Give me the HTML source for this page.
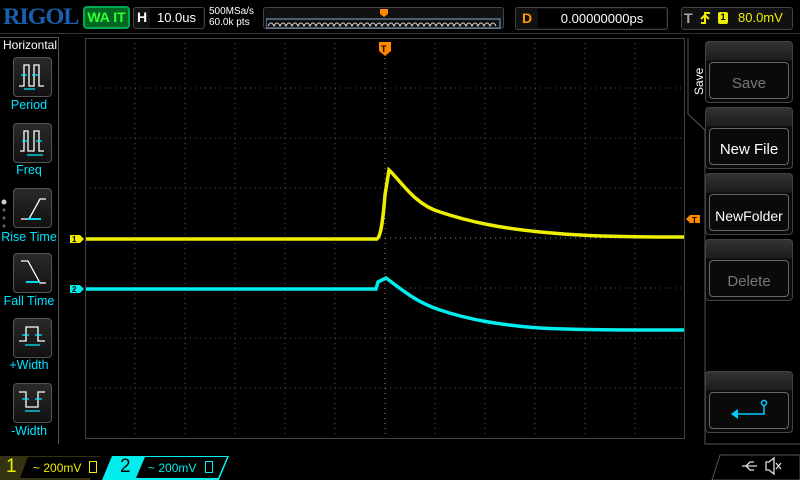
<!DOCTYPE html>
<html><head><style>
*{margin:0;padding:0;box-sizing:border-box}
body{width:800px;height:480px;background:#000;position:relative;overflow:hidden;font-family:"Liberation Sans",sans-serif;color:#fff}
.a{position:absolute}
.btn{position:absolute;left:13px;width:39px;height:40px;border:1px solid #555;border-radius:4px;background:linear-gradient(#2a2a2a,#111)}
.lbl{position:absolute;left:0;width:58px;text-align:center;color:#00e5ff;font-size:12.5px}
.sk{position:absolute;left:705px;width:88px;height:62px;border:1px solid #444;border-radius:4px;background:linear-gradient(#333 0,#1c1c1c 18px,#0a0a0a 19px)}
.sk div{position:absolute;left:3px;right:3px;top:20px;bottom:3px;border:1px solid #666;border-radius:4px;text-align:center;line-height:42px;font-size:15px}
</style></head><body>
<div class="a" style="left:3px;top:4px;font-family:'Liberation Serif',serif;font-weight:bold;font-size:23px;color:#1a5fb0;letter-spacing:-1px;transform:scaleX(1.05);transform-origin:left">RIGOL</div>
<div class="a" style="left:83px;top:6px;width:47px;height:23px;border:2px solid #0a5;border-radius:4px;background:#062;color:#3f3;font-weight:bold;font-size:14px;text-align:center;line-height:19px">WA IT</div>
<div class="a" style="left:133px;top:7px;width:72px;height:22px;border:1px solid #444;border-radius:3px;background:#111"></div>
<div class="a" style="left:137px;top:9px;font-weight:bold;font-size:14px">H</div>
<div class="a" style="left:150px;top:8px;width:53px;height:20px;background:#000;font-size:13px;text-align:center;line-height:20px">10.0us</div>
<div class="a" style="left:209px;top:6px;font-size:10px;line-height:11px">500MSa/s<br>60.0k pts</div>
<div class="a" style="left:263px;top:7px;width:241px;height:22px;border:1px solid #444;border-radius:3px;background:#111"></div>
<svg class="a" style="left:266px;top:8px" width="236" height="22"><rect x="0" y="11" width="234" height="9" fill="none" stroke="#8ac" stroke-width="1"/><path d="M2 18 q3-6 6 0 q3-6 6 0 q3-6 6 0 q3-6 6 0 q3-6 6 0 q3-6 6 0 q3-6 6 0 q3-6 6 0 q3-6 6 0 q3-6 6 0 q3-6 6 0 q3-6 6 0 q3-6 6 0 q3-6 6 0 q3-6 6 0 q3-6 6 0 q3-6 6 0 q3-6 6 0 q3-6 6 0 q3-6 6 0 q3-6 6 0 q3-6 6 0 q3-6 6 0 q3-6 6 0 q3-6 6 0 q3-6 6 0 q3-6 6 0 q3-6 6 0 q3-6 6 0 q3-6 6 0 q3-6 6 0 q3-6 6 0 q3-6 6 0 q3-6 6 0 q3-6 6 0 q3-6 6 0 q3-6 6 0 q3-6 6 0" fill="none" stroke="#ddd"/><path d="M114 1h8v5l-4 3-4-3z" fill="#f80"/></svg>
<div class="a" style="left:515px;top:7px;width:153px;height:23px;border:1px solid #444;border-radius:3px;background:#111"></div>
<div class="a" style="left:522px;top:10px;font-weight:bold;font-size:14px;color:#f90">D</div>
<div class="a" style="left:538px;top:9px;width:128px;height:19px;background:#000;font-size:13px;text-align:center;line-height:19px">0.00000000ps</div>
<div class="a" style="left:681px;top:7px;width:112px;height:23px;border:1px solid #444;border-radius:3px;background:#111"></div>
<div class="a" style="left:684px;top:10px;font-weight:bold;font-size:14px;color:#aaa">T</div>
<svg class="a" style="left:699px;top:10px" width="12" height="16"><path d="M2 13h4V3h5M2 9l4-4 4 4" fill="none" stroke="#ee0" stroke-width="2"/></svg>
<div class="a" style="left:718px;top:12px;width:10px;height:12px;background:#ee0;border-radius:2px;font-size:9px;color:#000;text-align:center;font-weight:bold">1</div>
<div class="a" style="left:738px;top:10px;font-size:13px;color:#ee0">80.0mV</div>
<div class="a" style="left:0;top:33px;width:800px;border-top:1px solid #333"></div>
<div class="a" style="left:0;top:37px;width:59px;height:407px;border-right:1px solid #555;border-top:1px solid #555"></div>
<div class="a" style="left:3px;top:38px;font-size:12px">Horizontal</div>
<div class="btn" style="top:57px"></div><div class="lbl" style="top:98px">Period</div>
<div class="btn" style="top:123px"></div><div class="lbl" style="top:163px">Freq</div>
<div class="btn" style="top:188px"></div><div class="lbl" style="top:230px">Rise Time</div>
<div class="btn" style="top:253px"></div><div class="lbl" style="top:294px">Fall Time</div>
<div class="btn" style="top:318px"></div><div class="lbl" style="top:358px">+Width</div>
<div class="btn" style="top:383px"></div><div class="lbl" style="top:424px">-Width</div>
<svg class="a" style="left:0;top:0" width="60" height="440" fill="none" stroke-width="1.3">
<path d="M19 86h5V65h5v21h5V65h5v21h5" stroke="#fff"/><path d="M21 75h6M32 75h6M24 89h11" stroke="#0ef"/>
<path d="M20 151h4V131h4v20h6V131h5v20h5" stroke="#fff"/><path d="M22 141h6M36 141h6M27 155h16" stroke="#0ef"/>
<path d="M21 219h8l11-20h6" stroke="#fff"/><path d="M27 219h14M37 214v0" stroke="#0ef" stroke-width="1.8"/>
<path d="M21 261h7l12 22h6" stroke="#fff"/><path d="M26 282h14" stroke="#0ef" stroke-width="1.8"/>
<path d="M19 341h7v-14h12v14h7" stroke="#fff"/><path d="M22 335h7M35 335h7M25 345h15" stroke="#0ef"/>
<path d="M19 392h7v15h12v-15h7" stroke="#fff"/><path d="M22 399h7M35 399h7M25 411h15" stroke="#0ef"/>
<circle cx="4" cy="202" r="2.5" fill="#ccc" stroke="none"/><circle cx="4" cy="210" r="1.5" fill="#666" stroke="none"/><circle cx="4" cy="218" r="1.5" fill="#666" stroke="none"/><circle cx="4" cy="226" r="1.5" fill="#666" stroke="none"/>
</svg>
<svg class="a" style="left:0;top:0" width="800" height="480">
<g stroke="#555" stroke-dasharray="1,4">
<path d="M135 38V438M185 38V438M235 38V438M285 38V438M335 38V438M435 38V438M485 38V438M535 38V438M585 38V438M635 38V438"/>
<path d="M85 88H684M85 138H684M85 188H684M85 288H684M85 338H684M85 388H684"/>
</g>
<g stroke="#888"><path d="M85 238H684M385 38V438" stroke-dasharray="1,4"/></g>
<rect x="85.5" y="38.5" width="599" height="400" fill="none" stroke="#444"/>
<path d="M379 42h12v9l-6 5-6-5z" fill="#f80"/>
<text x="381" y="52" font-size="9" fill="#000" font-weight="bold">T</text>
<path d="M86 239H377C381 236 383 220 385 195L389 170C400 180 415 205 440 212C470 222 500 228 540 232C570 235 600 237 684 237" fill="none" stroke="#ee0" stroke-width="3.5"/>
<path d="M86 289H376L378 282L386 278C400 288 415 302 440 310C470 320 500 325 540 328C580 330 620 330 684 330" fill="none" stroke="#0ee" stroke-width="3.5"/>
<path d="M70 235h10l4 4-4 4h-10z" fill="#ee0"/><text x="72" y="242" font-size="8" fill="#000" font-weight="bold">1</text>
<path d="M70 285h10l4 4-4 4h-10z" fill="#0ee"/><text x="72" y="292" font-size="8" fill="#000" font-weight="bold">2</text>
<path d="M686 219l4-4h10v8h-10z" fill="#f80"/><text x="692" y="223" font-size="8" fill="#000" font-weight="bold">T</text>
<path d="M688 38V114l17 16V444H800" fill="none" stroke="#555"/>
<path d="M0 456H100l-10 24H0z" fill="#331"/>
<path d="M28 457h73l-9 21H20z" fill="#000"/>
<path d="M112 456h117l-10 24H102z" fill="#0ee"/>
<path d="M145 457h82l-9 21h-82z" fill="#000"/>
<path d="M720 455h80v25h-88z" fill="none" stroke="#555"/>
<g stroke="#ddd" fill="none" stroke-width="1.3"><path d="M742 466h15M746 466l4-4h4M746 466l4 4h4"/><path d="M766 462h3l5-4v16l-5-4h-3z"/><path d="M776 463l5 6M781 463l-5 6"/></g>
</svg>
<div class="a" style="left:692px;top:95px;font-size:12px;transform:rotate(-90deg);transform-origin:left top">Save</div>
<div class="sk" style="top:41px"><div style="color:#777">Save</div></div>
<div class="sk" style="top:107px"><div>New File</div></div>
<div class="sk" style="top:173px"><div style="font-size:14px">NewFolder</div></div>
<div class="sk" style="top:239px"><div style="color:#777">Delete</div></div>
<div class="sk" style="top:371px"><div></div></div>
<svg class="a" style="left:730px;top:395px" width="45" height="30"><path d="M7 19h27v-9" fill="none" stroke="#0cf" stroke-width="1.5"/><circle cx="34" cy="8" r="2.5" fill="none" stroke="#0cf" stroke-width="1.5"/><path d="M1 19l7-5v10z" fill="#0cf"/></svg>
<div class="a" style="left:6px;top:456px;font-size:19px;color:#ee0">1</div>
<div class="a" style="left:33px;top:461px;font-size:12px;color:#ee0">~ 200mV</div>
<div class="a" style="left:89px;top:461px;width:8px;height:12px;border:1px solid #ee0"></div>
<div class="a" style="left:120px;top:456px;font-size:19px;color:#000">2</div>
<div class="a" style="left:148px;top:461px;font-size:12px;color:#0ee">~ 200mV</div>
<div class="a" style="left:205px;top:461px;width:8px;height:12px;border:1px solid #0ee"></div>
</body></html>
